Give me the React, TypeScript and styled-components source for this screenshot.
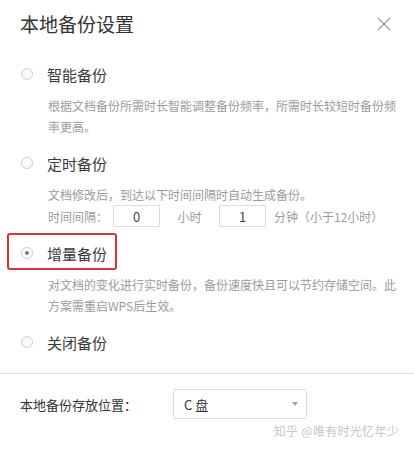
import React from "react";
import styled, { createGlobalStyle } from "styled-components";

const GlobalStyle = createGlobalStyle`
  html, body {
    margin: 0;
    padding: 0;
    background: #fff;
  }
  body {
    font-family: "Noto Sans CJK SC", "Noto Sans", sans-serif;
    color: #333;
  }
`;

type Mode = {
  key: string;
  label: string;
  desc?: string[];
  checked?: boolean;
  highlighted?: boolean;
  interval?: boolean;
};

const modes: Mode[] = [
  {
    key: "smart",
    label: "智能备份",
    desc: [
      "根据文档备份所需时长智能调整备份频率，所需时长较短时备份频",
      "率更高。",
    ],
  },
  {
    key: "timer",
    label: "定时备份",
    desc: ["文档修改后，到达以下时间间隔时自动生成备份。"],
    interval: true,
  },
  {
    key: "incr",
    label: "增量备份",
    desc: [
      "对文档的变化进行实时备份，备份速度快且可以节约存储空间。此",
      "方案需重启WPS后生效。",
    ],
    checked: true,
    highlighted: true,
  },
  { key: "off", label: "关闭备份" },
];

export default function App() {
  return (
    <Dialog>
      <GlobalStyle />
      <Header>
        <Title>本地备份设置</Title>
        <CloseButton aria-label="关闭">
          <svg width="14" height="14" viewBox="0 0 14 14">
            <path d="M1 1L13 13M13 1L1 13" stroke="#9a9a9a" strokeWidth="1.2" fill="none" />
          </svg>
        </CloseButton>
      </Header>

      <Options>
        {modes.map((m) => (
          <Option key={m.key}>
            <RadioRow $highlighted={m.highlighted}>
              <Radio $checked={m.checked} />
              <Label>{m.label}</Label>
            </RadioRow>
            {m.desc && (
              <Desc>
                {m.desc.map((line) => (
                  <div key={line}>{line}</div>
                ))}
              </Desc>
            )}
            {m.interval && (
              <IntervalRow>
                <span>时间间隔：</span>
                <NumBox>0</NumBox>
                <Unit>小时</Unit>
                <NumBox>1</NumBox>
                <Hint>分钟（小于12小时）</Hint>
              </IntervalRow>
            )}
          </Option>
        ))}
      </Options>

      <Divider />

      <Footer>
        <FooterLabel>本地备份存放位置：</FooterLabel>
        <Select>
          <span>C 盘</span>
          <Caret />
        </Select>
        <Watermark>知乎 @唯有时光忆年少</Watermark>
      </Footer>
    </Dialog>
  );
}

const Dialog = styled.div`
  width: 414px;
  height: 449px;
  background: #fff;
  overflow: hidden;
`;

const Header = styled.div`
  height: 48px;
  padding: 0 20px;
  display: flex;
  align-items: center;
  justify-content: space-between;
`;

const Title = styled.h1`
  margin: 0;
  font-size: 19px;
  font-weight: 400;
  color: #333;
  line-height: 30px;
`;

const CloseButton = styled.div`
  width: 14px;
  height: 14px;
  margin-right: 3px;
  display: flex;
`;

const Options = styled.div`
  padding: 11px 20px 0 21px;
  display: flex;
  flex-direction: column;
  gap: 11px;
`;

const Option = styled.div`
  display: flex;
  flex-direction: column;
`;

const RadioRow = styled.div<{ $highlighted?: boolean }>`
  position: relative;
  align-self: flex-start;
  height: 30px;
  display: inline-flex;
  align-items: center;
  gap: 14px;

  ${({ $highlighted }) =>
    $highlighted &&
    `
    &::after {
      content: "";
      position: absolute;
      top: -5px;
      bottom: -2px;
      left: -14px;
      right: -10px;
      border: 2px solid #d2343a;
      border-radius: 3px;
    }
  `}
`;

const Radio = styled.span<{ $checked?: boolean }>`
  width: 12px;
  height: 12px;
  box-sizing: border-box;
  border-radius: 50%;
  border: 1px solid #cfcfcf;
  background: #fafafa;
  display: flex;
  align-items: center;
  justify-content: center;

  &::before {
    content: "";
    width: 4px;
    height: 4px;
    border-radius: 50%;
    background: ${({ $checked }) => ($checked ? "#7a7a7a" : "transparent")};
  }
`;

const Label = styled.span`
  font-size: 15px;
  color: #3a3a3a;
`;

const Desc = styled.div`
  margin: 6px 0 0 27px;
  font-size: 12px;
  line-height: 21px;
  color: #9b9b9b;
  white-space: nowrap;
`;

const IntervalRow = styled.div`
  margin-left: 27px;
  height: 22px;
  display: flex;
  align-items: center;
  font-size: 12px;
  color: #9b9b9b;

  & > span:first-child {
    width: 65px;
  }
`;

const NumBox = styled.div`
  width: 47px;
  height: 22px;
  box-sizing: border-box;
  border: 1px solid #dcdcdc;
  display: flex;
  align-items: center;
  justify-content: center;
  font-size: 13px;
  color: #444;
`;

const Unit = styled.span`
  width: 59px;
  text-align: center;
`;

const Hint = styled.span`
  margin-left: 8px;
`;

const Divider = styled.div`
  margin-top: 16px;
  height: 1px;
  background: #dedede;
`;

const Footer = styled.div`
  position: relative;
  padding: 15px 20px 0;
  display: flex;
  align-items: center;
`;

const FooterLabel = styled.span`
  width: 153px;
  font-size: 13px;
  color: #333;
`;

const Select = styled.div`
  width: 134px;
  height: 30px;
  box-sizing: border-box;
  border: 1px solid #dcdcdc;
  border-radius: 2px;
  padding: 0 8px 0 10px;
  display: flex;
  align-items: center;
  justify-content: space-between;
  font-size: 13px;
  color: #333;
`;

const Caret = styled.span`
  width: 0;
  height: 0;
  border-left: 3px solid transparent;
  border-right: 3px solid transparent;
  border-top: 4px solid #a0a0a0;
`;

const Watermark = styled.span`
  position: absolute;
  right: 15px;
  top: 48px;
  font-size: 12px;
  color: #c6c6c6;
  letter-spacing: 0.3px;
`;
